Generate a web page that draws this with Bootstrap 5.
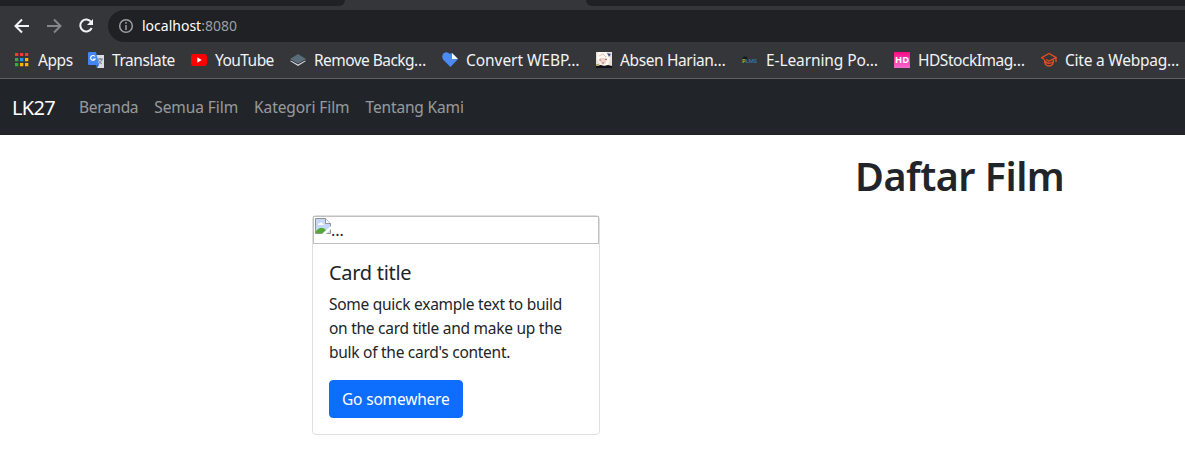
<!DOCTYPE html>
<html lang="id">
<head>
<meta charset="utf-8">
<meta name="viewport" content="width=device-width, initial-scale=1">
<title>Daftar Film</title>
<link href="https://cdn.jsdelivr.net/npm/bootstrap@5.3.0/dist/css/bootstrap.min.css" rel="stylesheet">
<style>
body{font-family:"Noto Sans",sans-serif;overflow:hidden;height:467px;background:#fff;color:#212529}
.chrome{background:#35363a;height:79px;border-bottom:1px solid #5f6064}
.tabs{height:6px}
.tab-l{width:345px;background:#202124;border-bottom-right-radius:6px}
.tab-r{width:599px;background:#202124;border-bottom-left-radius:6px}
.toolrow{height:32px;margin-top:4px;padding-left:13px}
.omnibox{height:32px;margin-left:12px;background:#202124;border-radius:16px 0 0 16px;padding-left:10px;font-size:14px;color:#9aa0a6;line-height:32px}
.omnibox b{font-weight:400;color:#fff}
.fwd{margin:0 14px}
.marks{display:grid;grid-template-columns:74px 103px 99px 152px 154px 146px 152px 147px 1fr;height:36px;padding-left:14px;color:#f1f3f4;font-size:15.500px;line-height:24px;white-space:nowrap}
.marks svg{flex:none}
.marks>:nth-child(1) span,.marks>:nth-child(2) span{letter-spacing:-.42px}
.marks>:nth-child(3) span,.marks>:nth-child(4) span{letter-spacing:-.55px}
.marks>:nth-child(5) span{letter-spacing:-.05px}
.marks>:nth-child(6) span{letter-spacing:-.38px}
.marks>:nth-child(7) span{letter-spacing:-.1px}
.marks>:nth-child(8) span{letter-spacing:-.47px}
.marks>:nth-child(9) span{letter-spacing:-.23px}
.site-nav{background:#212529;height:56px;padding:8px 0 8px 12px}
.site-nav .navbar-brand{color:#fff;font-size:20px;margin-right:16px;letter-spacing:-.7px;position:relative;top:1px}
.site-nav .nav-link{color:rgba(255,255,255,.55);padding:8px;white-space:nowrap;font-size:15.500px;line-height:24px;letter-spacing:-.08px}
.site-nav .nav-link:first-child{letter-spacing:-.3px}
.site-nav .nav-link:last-child{letter-spacing:-.15px}
.wide{padding-left:312px}
.wide h1{font-size:39.500px;line-height:48px;font-weight:600;padding-left:543px;letter-spacing:-.5px;position:relative;top:1px}
.film{width:18rem;border-color:#dfdfdf;border-radius:4px}
.film .card-title{font-size:20px;line-height:24px;font-weight:400;letter-spacing:-.3px;position:relative;top:1px}
.film .card-text{font-size:15.500px;line-height:24px;letter-spacing:-.27px}
.broken{height:28px;border:1px solid #c0c0c0;padding:1px;line-height:24px}
.film .btn{background:#0d6efd;border-color:#0d6efd;border-radius:4px;font-size:15.500px;line-height:24px;letter-spacing:-.18px}
</style>
</head>
<body>
<div class="chrome">
  <div class="tabs d-flex justify-content-between"><div class="tab-l"></div><div class="tab-r"></div></div>
  <div class="toolrow d-flex align-items-center">
    <svg width="18" height="18" viewBox="0 0 18 18" fill="none" stroke="#f1f3f4" stroke-width="2"><path d="M16 9H3M9 2.500 2.500 9 9 15.500"/></svg>
    <svg class="fwd" width="20" height="18" viewBox="-2 0 20 18" fill="none" stroke="#85868a" stroke-width="2"><path d="M0 9h13M7 2.500 13.500 9 7 15.500"/></svg>
    <svg width="17" height="18" viewBox="1 0 17 18"><path d="M13.200 5A6 6 0 1 0 13.700 11" fill="none" stroke="#f1f3f4" stroke-width="2"/><path d="M15 2v6H9z" fill="#f1f3f4"/></svg>
    <div class="omnibox d-flex align-items-center flex-grow-1">
      <svg width="16" height="16" viewBox="0 0 16 16" class="me-2" fill="none" stroke="#9aa0a6" stroke-width="1.500"><circle cx="8" cy="8" r="6.300"/><path d="M8 7v5M8 4v1.700"/></svg>
      <span><b>localhost</b>:8080</span>
    </div>
  </div>
  <div class="marks align-items-center">
    <div class="d-flex align-items-center gap-2"><svg width="16" height="16"><path fill="#f33b30" d="M1 1h3.300v3H1zM6 1h3.300v3H6zM11 1h3.300v3H11z"/><path fill="#35a853" d="M1 6h3.300v3.300H1zM1 11h3.300v3.300H1z"/><path fill="#2196f3" d="M6 6h3.300v3.300H6z"/><path fill="#fbb605" d="M11 6h3.300v3.300H11zM6 11h3.300v3.300H6zM11 11h3.300v3.300H11z"/></svg><span>Apps</span></div>
    <div class="d-flex align-items-center gap-2"><svg width="16" height="16"><path fill="#d9dce0" d="M7 3h9v13H9z"/><path d="M9 7h6M12 6v2M14 7q-1 4-4 5M10 8q2 3 4 4" stroke="#6f8187" fill="none"/><path fill="#4285f4" d="M1 0h7l3 13H1q-1 0-1-1V1q0-1 1-1z"/><path fill="#3367d6" d="M8 13h3l-2 3z"/><path d="M7 4.500A2.400 2.400 0 1 0 7.200 7H5" fill="none" stroke="#fff" stroke-width="1.200"/></svg><span>Translate</span></div>
    <div class="d-flex align-items-center gap-2"><svg width="16" height="16"><rect y="2" width="16" height="12" rx="3" fill="#f00"/><path fill="#fff" d="m6.300 5.300 4.400 2.700-4.400 2.700z"/></svg><span>YouTube</span></div>
    <div class="d-flex align-items-center gap-2"><svg width="16" height="16"><path fill="#d5dadd" d="m0 9 8-4 8 4-8 5z"/><path fill="#35363a" d="m0 8 8 4.500L16 8V6H0z"/><path fill="#596d79" d="m0 7 8-5 8 5-8 4.500z"/></svg><span>Remove Backg…</span></div>
    <div class="d-flex align-items-center gap-2"><svg width="16" height="16"><path fill="#4c8bf5" d="M8.500 15 1 7.500Q-1 3 2 1q3-2 6 1 1-1 2-1l6 6z"/><path fill="#fff" d="M10 1v6h6z"/></svg><span>Convert WEBP…</span></div>
    <div class="d-flex align-items-center gap-2"><svg width="16" height="16"><path fill="#eadfd9" d="M0 0h16v16H0z"/><path fill="#fff9f2" d="M2 0h8l4 5-2 8H5L1 7z"/><path fill="#f2cfc3" d="M4 6h7l-1 5-3 2-3-3z"/><path stroke="#8d7c86" fill="none" d="M3 8h2M9 7.500h2M6 11h2"/><path stroke="#d9c5bd" fill="none" d="m3 4 4-2 3 3"/><path fill="#485582" d="m11 1 4 1-2 3z"/><path fill="#111216" d="M0 14l5-1 3 1 4-1 4 1v2H0z"/><path fill="#b9a76e" d="M0 12h3v2H0z"/></svg><span>Absen Harian…</span></div>
    <div class="d-flex align-items-center gap-2"><svg width="16" height="16" font-family="Noto Sans" font-size="6" font-weight="700"><circle cx="3" cy="7" r="2.500" fill="#17181b"/><text x="0" y="10.500" fill="#b9a526">P</text><text x="3.500" y="10.500" fill="#2b719b" textLength="11.500">LMS</text></svg><span>E-Learning Po…</span></div>
    <div class="d-flex align-items-center gap-2"><svg width="16" height="16"><defs><linearGradient id="pink" x2="0" y2="1"><stop stop-color="#ff0a86"/><stop offset="1" stop-color="#f06bd0"/></linearGradient></defs><path fill="url(#pink)" d="M0 0h16v16H0z"/><text x="1" y="11.300" fill="#fff" font-size="9" font-weight="700" textLength="14" lengthAdjust="spacingAndGlyphs">HD</text></svg><span>HDStockImag…</span></div>
    <div class="d-flex align-items-center gap-2"><svg width="16" height="16" fill="none" stroke="#e2501f" stroke-width="1.300"><path d="M3.500 7.500.700 5.700 8 1.500l7.300 4.200L8 9 5 7.500M15 6v4M3.500 8q0 6 4.500 6t4.500-6M4 9q3 4 8 1"/></svg><span>Cite a Webpag…</span></div>
  </div>
</div>
<nav class="site-nav d-flex align-items-center">
  <a class="navbar-brand" href="#">LK27</a>
  <div class="d-flex">
    <a class="nav-link" href="#">Beranda</a><a class="nav-link" href="#">Semua Film</a><a class="nav-link" href="#">Kategori Film</a><a class="nav-link" href="#">Tentang Kami</a>
  </div>
</nav>
<main class="wide pt-3">
  <h1 class="mb-3">Daftar Film</h1>
  <div class="card film">
    <div class="broken d-flex"><svg width="16" height="16" viewBox="0 0 16 16"><path d="M.500.500h10l5 5v10H.500z" fill="#c3d9f7" stroke="#939393"/><path d="M10.500.500v5h5" fill="#fff" stroke="#939393"/><path d="M3 7q0-2 2-2 2-2 3 1 1 0 1 1z" fill="#fff"/><path d="M1 15v-2q5-6 10-1l-3 3z" fill="#54a936"/><path d="m7 16 9-8v3l-5 5z" fill="#fff"/></svg><span>...</span></div>
    <div class="card-body">
      <h5 class="card-title">Card title</h5>
      <p class="card-text">Some quick example text to build on the card title and make up the bulk of the card's content.</p>
      <a href="#" class="btn btn-primary">Go somewhere</a>
    </div>
  </div>
</main>
<script src="https://cdn.jsdelivr.net/npm/bootstrap@5.3.0/dist/js/bootstrap.bundle.min.js"></script>
</body>
</html>
